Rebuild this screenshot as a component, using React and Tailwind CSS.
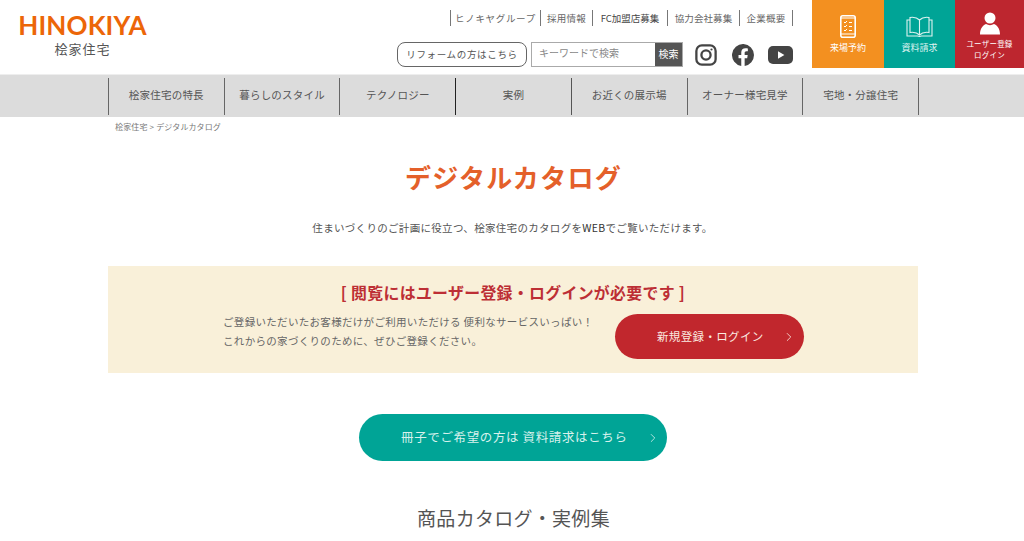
import { ChevronRight } from 'lucide-react';

const font = { fontFamily: '"Noto Sans CJK JP", "Noto Sans", sans-serif' };

const topLinks = [
  { label: 'ヒノキヤグループ', w: 'w-[90px]', cls: 'text-[#666] tracking-[0.07em]' },
  { label: '採用情報', w: 'w-[52px]', cls: 'text-[#666] tracking-[0.03em]' },
  { label: 'FC加盟店募集', w: 'w-[75px]', cls: 'text-[#444]' },
  { label: '協力会社募集', w: 'w-[72px]', cls: 'text-[#666] tracking-[0.01em]' },
  { label: '企業概要', w: 'w-[53px]', cls: 'text-[#666] tracking-[0.03em]' },
];

const navItems = [
  { label: '桧家住宅の特長', line: 'border-[#666]' },
  { label: '暮らしのスタイル', line: 'border-[#666]' },
  { label: 'テクノロジー', line: 'border-[#666]' },
  { label: '実例', line: 'border-[#222]' },
  { label: 'お近くの展示場', line: 'border-[#555]' },
  { label: 'オーナー様宅見学', line: 'border-[#666]' },
  { label: '宅地・分譲住宅', line: 'border-[#666]' },
];

const Instagram = () => (
  <svg width="22" height="22" viewBox="0 0 24 24" fill="none" stroke="#444" strokeWidth="2.5">
    <rect x="1.5" y="1.5" width="21" height="21" rx="6" />
    <circle cx="12" cy="12" r="5" />
    <circle cx="18" cy="6" r="1.2" fill="#444" stroke="none" />
  </svg>
);

const FacebookIcon = () => (
  <svg width="22" height="22" viewBox="0 0 24 24">
    <path fill="#444" d="M24 12a12 12 0 1 0-13.9 11.9v-8.4H7.1V12h3V9.4c0-3 1.8-4.7 4.5-4.7 1.3 0 2.7.2 2.7.2v3h-1.5c-1.5 0-2 .9-2 1.9V12h3.3l-.5 3.5h-2.8v8.4A12 12 0 0 0 24 12z" />
  </svg>
);

const Youtube = () => (
  <svg width="25" height="18" viewBox="0 0 25 18" className="-ml-[1px] mr-[1px]">
    <rect width="25" height="18" rx="5" fill="#444" />
    <path d="M10 5.2v7.6l6.4-3.8z" fill="#fff" />
  </svg>
);

const TabletIcon = () => (
  <svg width="16" height="23" viewBox="0 0 16 23" fill="none" stroke="#fff">
    <rect x="0.8" y="0.8" width="14.4" height="21.4" rx="2" strokeWidth="1.6" />
    <path d="M1 3h14M1 19h14" strokeWidth="1.2" />
    <path d="M4 7l1 1 2-2M4 11l1 1 2-2M4 15l1 1 2-2" strokeWidth="1" />
    <path d="M9 7.5h3M9 11.5h3M9 15.5h3" strokeWidth="1" />
  </svg>
);

const BookIcon = () => (
  <svg width="27" height="21" viewBox="0 0 27 21" fill="none" stroke="#dff3f0" strokeWidth="1.1">
    <path d="M13.5 4C11 1.5 7.5 1 4 1.5v15c3.5-.5 7 0 9.5 2.5 2.5-2.5 6-3 9.5-2.5v-15C19.5 1 16 1.5 13.5 4zM13.5 4v15" />
    <path d="M4 4H1v16h10.5l2 .5 2-.5H26V4h-3" />
  </svg>
);

const UserIcon = () => (
  <svg width="20" height="23" viewBox="0 0 20 23" fill="#fff">
    <circle cx="10" cy="6" r="5.5" />
    <path d="M0 22.5c0-6 3-9.5 6-10.5 2.5 1.5 5.5 1.5 8 0 3 1 6 4.5 6 10.5z" />
  </svg>
);

const App = () => (
  <div style={font} className="h-[541px] w-[1024px] overflow-hidden bg-white">
    <header className="flex h-[74px] justify-between">
      <div className="ml-[19px] flex w-[127px] flex-col items-center pt-[11px]">
        <div style={{ fontFamily: 'Lato, sans-serif' }} className="whitespace-nowrap text-[26px] leading-[29px] font-bold tracking-[0.005em] text-[#ec6608]">HINOKIYA</div>
        <div className="text-[13px] leading-[18px] tracking-[0.08em] text-[#555]">桧家住宅</div>
      </div>

      <div className="flex">
        <div className="mr-[18px] flex flex-col items-end">
          <ul className="mt-[10px] mr-[1px] flex h-[16px] items-center border-r border-[#777]">
            {topLinks.map((l) => (
              <li key={l.label} className={`${l.w} border-l border-[#777] text-center text-[9.5px] leading-[16px] whitespace-nowrap ${l.cls}`}>{l.label}</li>
            ))}
          </ul>
          <div className="mt-[16px] flex items-center">
            <div className="flex h-[25px] w-[130px] items-center justify-center rounded-[8px] border border-[#666] text-[9.5px] tracking-[0.07em] text-[#555]">リフォームの方はこちら</div>
            <div className="ml-[4px] flex h-[25px] w-[152px] border border-[#aaa]">
              <div className="flex-1 pl-[7px] text-[10px] leading-[20px] text-[#888]">キーワードで検索</div>
              <div className="w-[27px] bg-[#555] text-center text-[10px] leading-[22px] text-white">検索</div>
            </div>
            <div className="ml-[12px] flex items-center gap-[15px]">
              <Instagram />
              <FacebookIcon />
              <Youtube />
            </div>
          </div>
        </div>

        <div className="flex h-[68px] text-white">
          <div className="flex w-[72px] flex-col items-center bg-[#f39020] pt-[15px]">
            <TabletIcon />
            <span className="mt-[3px] text-[9px] leading-[14px]">来場予約</span>
          </div>
          <div className="flex w-[71px] flex-col items-center bg-[#00a496] pt-[16px]">
            <BookIcon />
            <span className="mt-[4px] text-[9px] leading-[14px] text-[#dff3f0]">資料請求</span>
          </div>
          <div className="flex w-[69px] flex-col items-center bg-[#bd262f] pt-[12px]">
            <UserIcon />
            <span className="mt-[3px] text-center text-[7.5px] leading-[11px] tracking-[0.03em]">ユーザー登録<br />ログイン</span>
          </div>
        </div>
      </div>
    </header>

    <nav className="flex h-[43px] items-center pl-[108px] border-t border-[#eee] bg-[#dcdcdc]">
      <ul className="flex h-[37px] w-[811px] border-r border-[#666]">
        {navItems.map((item) => (
          <li key={item.label} className={`flex flex-1 items-center justify-center border-l ${item.line} pb-[2px] text-[10.5px] tracking-[0.02em] whitespace-nowrap text-[#555]`}>{item.label}</li>
        ))}
      </ul>
    </nav>

    <div className="pl-[115px] pt-[4px] text-[8px] leading-[12px] tracking-[0.02em] text-[#777]">桧家住宅 &gt; デジタルカタログ</div>

    <main className="flex flex-col items-center">
      <h1 className="mt-[24px] ml-[3px] text-[26px] leading-[40px] font-bold tracking-[0.05em] text-[#e4602a]">デジタルカタログ</h1>
      <p className="mt-[22px] ml-[1px] text-[10.5px] leading-[18px] tracking-[0.03em] text-[#555]">住まいづくりのご計画に役立つ、桧家住宅のカタログを<span className="text-[#333]">WEB</span>でご覧いただけます。</p>

      <section className="mt-[29px] ml-[2px] h-[107px] w-[810px] bg-[#f9f0d9] pt-[15px]">
        <h2 className="text-center text-[15.9px] leading-[24px] font-bold tracking-[0.02em] text-[#bd2f35]">[ 閲覧にはユーザー登録・ログインが必要です ]</h2>
        <div className="mt-[9px] flex pl-[115px]">
          <p className="-mt-[2px] w-[392px] text-[10.5px] leading-[19px] tracking-[0.03em] text-[#666]">ご登録いただいたお客様だけがご利用いただける 便利なサービスいっぱい！<br />これからの家づくりのために、ぜひご登録ください。</p>
          <a className="relative flex h-[45px] w-[189px] items-center rounded-full bg-[#c1272d] pl-[42px] text-[11.5px] tracking-[0.03em] text-[#fbe9e0]">
            新規登録・ログイン
            <ChevronRight size={14} strokeWidth={1.4} className="absolute right-[8px] top-[16px] text-[#fbe9e0]" />
          </a>
        </div>
      </section>

      <a className="relative mt-[41px] ml-[2px] flex h-[47px] w-[308px] items-center rounded-full bg-[#00a496] pl-[42px] text-[12.5px] tracking-[0.05em] text-[#d6f1ec]">
        冊子でご希望の方は 資料請求はこちら
        <ChevronRight size={14} strokeWidth={1.4} className="absolute right-[7px] top-[17px] text-[#d6f1ec]" />
      </a>

      <h2 className="mt-[42px] ml-[3px] text-[19px] leading-[30px] tracking-[0.015em] text-[#555]">商品カタログ・実例集</h2>
    </main>
  </div>
);

export default App;
